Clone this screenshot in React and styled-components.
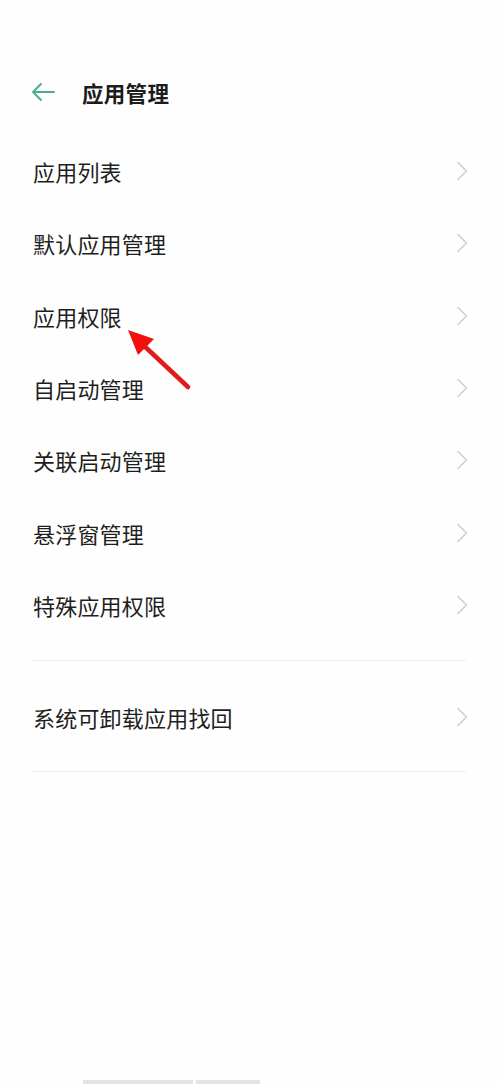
import React from "react";
import styled, { createGlobalStyle } from "styled-components";

const Global = createGlobalStyle`
  html, body { margin: 0; padding: 0; background: #fefefe; }
  body { font-family: "Noto Sans CJK SC", "Noto Sans", sans-serif; }
`;

const Page = styled.div`
  position: relative;
  width: 500px;
  height: 1084px;
  display: flex;
  flex-direction: column;
  background: #fefefe;
  overflow: hidden;
`;

const Header = styled.div`
  display: flex;
  align-items: center;
  height: 42px;
  margin-top: 71px;
  margin-bottom: 22px;
  padding-left: 30px;
  gap: 26px;
`;

const Title = styled.div`
  font-size: 21.5px;
  font-weight: 700;
  color: #1c1c1c;
  letter-spacing: 0.3px;
`;

const List = styled.div`
  display: flex;
  flex-direction: column;
  margin-top: ${(p) => p.$top || 0}px;
`;

const Row = styled.div`
  height: 72.3px;
  display: flex;
  align-items: center;
  justify-content: space-between;
  padding: 0 32px 0 33px;
`;

const Label = styled.span`
  font-size: 22px;
  line-height: 1;
  color: #1e1e1e;
  letter-spacing: 0.2px;
`;

const Divider = styled.div`
  height: 1px;
  margin: ${(p) => p.$top}px 34px 0 32px;
  background: #ececec;
`;

const Footer = styled.div`
  margin-top: auto;
  height: 4px;
  display: flex;
  gap: 3px;
  padding-left: 83px;
`;

const Bar = styled.div`
  width: ${(p) => p.$w}px;
  background: #e3e3e3;
`;

const Pointer = styled.svg`
  position: absolute;
  left: 120px;
  top: 322px;
`;

const BackArrow = () => (
  <svg width="26" height="20" viewBox="0 0 26 20">
    <path d="M3 10 H24 M11 2 L3 10 L11 18" fill="none" stroke="#47b08d" strokeWidth="2" strokeLinecap="round" strokeLinejoin="round" />
  </svg>
);

const Chevron = () => (
  <svg width="12" height="20" viewBox="0 0 12 20">
    <path d="M2 1.5 L10.5 10 L2 18.5" fill="none" stroke="#cdcdcd" strokeWidth="1.5" strokeLinecap="round" strokeLinejoin="round" />
  </svg>
);

const Item = ({ label }) => (
  <Row>
    <Label>{label}</Label>
    <Chevron />
  </Row>
);

const mainItems = ["应用列表", "默认应用管理", "应用权限", "自启动管理", "关联启动管理", "悬浮窗管理", "特殊应用权限"];

export default function App() {
  return (
    <Page>
      <Global />
      <Header>
        <BackArrow />
        <Title>应用管理</Title>
      </Header>
      <List>
        {mainItems.map((l) => (
          <Item key={l} label={l} />
        ))}
      </List>
      <Divider $top={19} />
      <List $top={20}>
        <Item label="系统可卸载应用找回" />
      </List>
      <Divider $top={18} />
      <Footer>
        <Bar $w={110} />
        <Bar $w={64} />
      </Footer>
      <Pointer width="80" height="74" viewBox="0 0 80 74">
        <line x1="20" y1="20" x2="68" y2="65" stroke="#e01b1b" strokeWidth="4.5" strokeLinecap="round" />
        <polygon points="8,8 34,17 18,33" fill="#f01010" />
      </Pointer>
    </Page>
  );
}
